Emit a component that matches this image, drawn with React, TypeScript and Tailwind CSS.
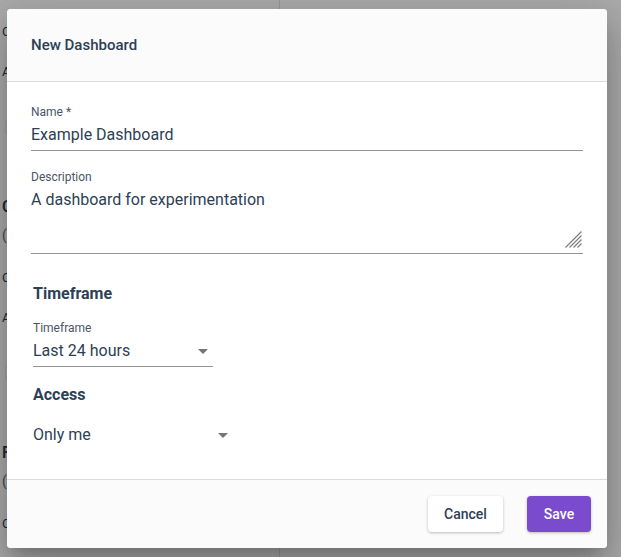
import React from "react";

const ArrowDrop = () => (
  <svg width="10" height="5" viewBox="0 0 10 5" className="text-[#757575]">
    <path d="M0 0l5 5 5-5z" fill="currentColor" />
  </svg>
);

const ResizeHandle = () => (
  <svg width="17" height="17" viewBox="0 0 17 17" className="text-[#7a7a7a]">
    <g stroke="currentColor" strokeWidth="1.1" fill="none">
      <line x1="0.5" y1="16.5" x2="16.5" y2="0.5" />
      <line x1="4.5" y1="16.5" x2="16.5" y2="4.5" />
      <line x1="8.5" y1="16.5" x2="16.5" y2="8.5" />
      <line x1="12.5" y1="16.5" x2="16.5" y2="12.5" />
    </g>
  </svg>
);

// page content sitting behind the dialog
const PageSection = ({ title }: { title: string }) => (
  <div className="h-[246px] pl-[2px] text-[#2d3f55]">
    <div className="text-base leading-6 font-semibold">{title}</div>
    <div className="mt-[6px] text-sm leading-5 text-[#6b6b6b]">(optional)</div>
    <div className="mt-[23px] text-[13px] leading-5">Chart type</div>
    <div className="mt-[20px] text-[13px] leading-5">Area</div>
    <div className="ml-[3px] mt-[37px] h-[16px] w-[260px] rounded border border-[#ececec]" />
  </div>
);

export default function App() {
  return (
    <div className="relative h-[557px] w-full overflow-hidden bg-white font-['Roboto',sans-serif]">
      {/* Page behind */}
      <div className="-mt-[51px] w-[280px] border-r border-[#e4e4e4]">
        <PageSection title="Chart" />
        <PageSection title="Chart options" />
        <PageSection title="Filters" />
      </div>

      {/* Backdrop */}
      <div className="absolute inset-0 bg-black/[0.33]" />

      {/* Dialog */}
      <div className="absolute left-[7px] top-[9px] flex h-[539px] w-[600px] flex-col overflow-hidden rounded bg-white shadow-[0_11px_15px_-7px_rgba(0,0,0,0.2),0_24px_38px_3px_rgba(0,0,0,0.14),0_9px_46px_8px_rgba(0,0,0,0.12)]">
        {/* Header */}
        <div className="flex h-[73px] shrink-0 items-center border-b border-[#dcdcdc] bg-[#fbfbfb] px-6">
          <h2 className="text-[15px] font-medium text-[#2d3f55]">New Dashboard</h2>
        </div>

        {/* Body */}
        <div className="flex-1 px-6 pt-[22px]">
          {/* Name */}
          <div className="text-xs leading-4 text-[#4a5568]">Name *</div>
          <div className="border-b border-[#949494] pt-[3px] pb-[3px] text-base leading-6 text-[#2d3f55]">
            Example Dashboard
          </div>

          {/* Description */}
          <div className="mt-[18px] text-xs leading-4 text-[#4a5568]">Description</div>
          <div className="relative h-[69px] border-b border-[#949494] pt-[3px] text-base leading-6 text-[#2d3f55]">
            A dashboard for experimentation
            <div className="absolute right-[1px] bottom-[5px] flex">
              <ResizeHandle />
            </div>
          </div>

          {/* Timeframe */}
          <div className="ml-[2px] mt-[28px] text-base leading-6 font-bold text-[#2d3f55]">Timeframe</div>
          <div className="ml-[2px] mt-[14px] text-xs leading-4 text-[#4a5568]">Timeframe</div>
          <div className="ml-[2px] flex w-[180px] items-center justify-between border-b border-[#949494] pt-[3px] pb-[3px] pr-[5px] text-base leading-6 text-[#2d3f55]">
            <span>Last 24 hours</span>
            <ArrowDrop />
          </div>

          {/* Access */}
          <div className="ml-[2px] mt-[16px] text-base leading-6 font-bold text-[#2d3f55]">Access</div>
          <div className="ml-[2px] mt-[16px] flex w-[200px] items-center justify-between pr-[5px] text-base leading-6 text-[#2d3f55]">
            <span>Only me</span>
            <ArrowDrop />
          </div>
        </div>

        {/* Footer */}
        <div className="flex h-[69px] shrink-0 items-center justify-end gap-6 border-t border-[#dcdcdc] bg-[#fbfbfb] pr-4">
          <button className="h-9 w-[75px] rounded bg-white text-sm font-medium text-[#2d3f55] shadow-[0_1px_3px_rgba(0,0,0,0.25)]">
            Cancel
          </button>
          <button className="h-9 w-[64px] rounded bg-[#7b4bce] text-sm font-medium text-white shadow-[0_1px_3px_rgba(0,0,0,0.25)]">
            Save
          </button>
        </div>
      </div>
    </div>
  );
}
